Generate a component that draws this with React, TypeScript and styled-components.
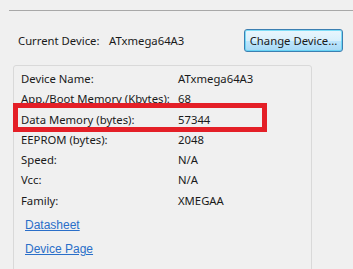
import React from 'react'
import styled, { createGlobalStyle } from 'styled-components'

const GlobalStyle = createGlobalStyle`
  html, body {
    margin: 0;
    padding: 0;
    background: #f0f0f0;
  }
  body {
    font-family: 'Noto Sans', 'Open Sans', sans-serif;
    font-size: 11.3px;
    color: #1a1a1a;
    overflow: hidden;
  }
`

const Page = styled.div`
  width: 353px;
  height: 269px;
  overflow: hidden;
`

const Divider = styled.div`
  margin: 10px 0 0 9px;
  border-top: 1px solid #a8a8a8;
`

const Header = styled.div`
  display: flex;
  align-items: center;
  margin-top: 18px;
  padding: 0 10px 0 18px;
  height: 23px;
  white-space: nowrap;
`

const Label = styled.span`
  width: 91px;
`

const Spacer = styled.div`
  flex: 1;
`

const Button = styled.button`
  width: 99px;
  height: 23px;
  padding: 0;
  font: inherit;
  color: #1a1a1a;
  border: 1px solid #3c7fb1;
  border-radius: 3px;
  background: linear-gradient(#eaf6fd 0%, #d9f0fc 50%, #bee6fd 51%, #a7d9f5 100%);
  box-shadow: inset 0 0 0 1px #48d0f5aa;
`

const Panel = styled.div`
  position: relative;
  margin: 13px 0 0 13px;
  width: 297px;
  height: 220px;
  padding-top: 3px;
  border: 1px solid #d9d9d9;
  border-radius: 3px;
`

const Row = styled.div`
  display: grid;
  grid-template-columns: 157px 1fr;
  height: 20.3px;
  line-height: 20px;
  padding-left: 7px;
  white-space: nowrap;
`

const LinkRow = styled.div<{ $first?: boolean }>`
  height: 24px;
  line-height: 24px;
  margin-top: ${p => (p.$first ? '2px' : '0')};
  padding-left: 11px;
`

const Link = styled.a`
  font-family: 'Liberation Sans', Arial, sans-serif;
  font-size: 12px;
  color: #2a6fc9;
  text-decoration: underline;
`

const Highlight = styled.div`
  position: absolute;
  left: -1px;
  top: 37px;
  width: 244px;
  height: 19px;
  border: 5px solid #e41f27;
`

const info: [string, string][] = [
  ['Device Name:', 'ATxmega64A3'],
  ['App./Boot Memory (Kbytes):', '68'],
  ['Data Memory (bytes):', '57344'],
  ['EEPROM (bytes):', '2048'],
  ['Speed:', 'N/A'],
  ['Vcc:', 'N/A'],
  ['Family:', 'XMEGAA'],
]

export default function App() {
  return (
    <Page>
      <GlobalStyle />
      <Divider />
      <Header>
        <Label>Current Device:</Label>
        <span>ATxmega64A3</span>
        <Spacer />
        <Button>Change Device...</Button>
      </Header>
      <Panel>
        {info.map(([name, value]) => (
          <Row key={name}>
            <span>{name}</span>
            <span>{value}</span>
          </Row>
        ))}
        <LinkRow $first>
          <Link href="#">Datasheet</Link>
        </LinkRow>
        <LinkRow>
          <Link href="#">Device Page</Link>
        </LinkRow>
        <Highlight />
      </Panel>
    </Page>
  )
}
